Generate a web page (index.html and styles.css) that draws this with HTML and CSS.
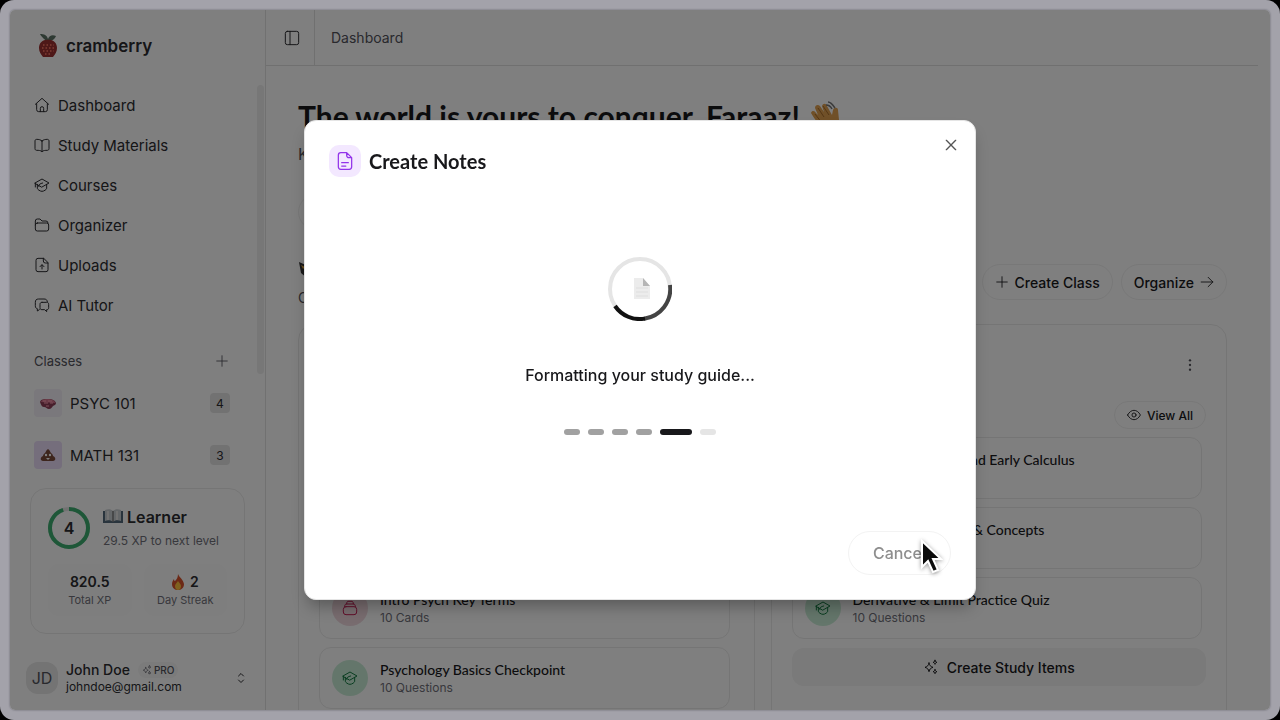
FILE: index.html
```html
<!DOCTYPE html>
<html lang="en">
<head>
    <meta charset="UTF-8">
    <meta name="viewport" content="width=device-width, initial-scale=1.0">
    <title>cramberry</title>
    <link rel="stylesheet" href="styles.css">
</head>
<body>
    <!-- Shared icons -->
    <svg class="sprite" aria-hidden="true">
        <symbol id="i-home" viewBox="0 0 24 24"><path d="M2 11 12 2l10 9M4 10v9a3 3 0 0 0 3 3h10a3 3 0 0 0 3-3v-9M9.500 22v-5a2.500 2.500 0 0 1 5 0v5"/></symbol>
        <symbol id="i-book" viewBox="0 0 24 24"><path d="M12 6c-2-2-5-2.500-8-2.500-1.500 0-2.500 1-2.500 2.500v11.500c0 1.500 1 2.500 2.500 2.500 3 0 6 0 8 2 2-2 5-2 8-2 1.500 0 2.500-1 2.500-2.500V6c0-1.500-1-2.500-2.500-2.500-3 0-6 .5-8 2.500zM12 6v16"/></symbol>
        <symbol id="i-cap" viewBox="0 0 24 24"><path d="M1.500 9 12 3l10.500 6L12 15zM2 9.500V15M5 11v6c0 1.500 4 4.500 7 4.500s7-3 7-4.500v-6M7 14c0-3 2-4 6-5"/></symbol>
        <symbol id="i-folder" viewBox="0 0 24 24"><path d="M2 12V6a3 3 0 0 1 3-3h4l3 3h6a3 3 0 0 1 3 3M5 9h14a3 3 0 0 1 3 3v6a3 3 0 0 1-3 3H5a3 3 0 0 1-3-3v-6a3 3 0 0 1 3-3z"/></symbol>
        <symbol id="i-upload" viewBox="0 0 24 24"><path d="M14 2H6a3 3 0 0 0-3 3v14a3 3 0 0 0 3 3h12a3 3 0 0 0 3-3V9zM14 2v4a3 3 0 0 0 3 3h4M12 18v-6M9 14.500l3-3 3 3"/></symbol>
        <symbol id="i-chat" viewBox="0 0 24 24"><path d="M20 7c-.5-3-2-4-5-4H7C3.500 3 2 4.500 2 8v5c0 3 1 4 3 4.500V21l3-2M12 8h7c2 0 3 1 3 3v5c0 2-1 3-3 3v3l-3-3h-4c-2 0-3-1-3-3v-5c0-2 1-3 3-3z"/></symbol>
        <symbol id="i-panel" viewBox="0 0 24 24"><rect x="2" y="2" width="20" height="20" rx="3"/><path d="M9 2v20"/></symbol>
        <symbol id="i-plus" viewBox="0 0 24 24"><path d="M12 3v18M3 12h18"/></symbol>
        <symbol id="i-arrow" viewBox="0 0 24 24"><path d="M2 12h20M14 4l8 8-8 8"/></symbol>
        <symbol id="i-close" viewBox="0 0 24 24"><path d="M5 5l14 14M19 5 5 19"/></symbol>
        <symbol id="i-eye" viewBox="0 0 24 24"><path d="M1 12c3-5.500 7-8 11-8s8 2.500 11 8c-3 5.500-7 8-11 8S4 17.500 1 12z"/><circle cx="12" cy="12" r="3.500"/></symbol>
        <symbol id="i-sparkle" viewBox="0 0 24 24"><path d="M9 6c1 4 2 5 6 6.500-4 1.500-5 2.500-6 6.500-1-4-2-5-6-6.500 4-1.500 5-2.500 6-6.500zM18 2c.5 2 1 2.500 3 3-2 .5-2.500 1-3 3-.5-2-1-2.500-3-3 2-.5 2.500-1 3-3zM18 16c.5 2 1 2.500 3 3-2 .5-2.500 1-3 3-.5-2-1-2.500-3-3 2-.5 2.500-1 3-3z"/></symbol>
        <symbol id="i-sort" viewBox="0 0 24 24"><path d="M7 8l5-5 5 5M7 16l5 5 5-5"/></symbol>
        <symbol id="i-note" viewBox="0 0 24 24"><path d="M14 2H7a3 3 0 0 0-3 3v14a3 3 0 0 0 3 3h10a3 3 0 0 0 3-3V8zM14 2v3a3 3 0 0 0 3 3h3M8 14h8M8 18h5"/></symbol>
        <symbol id="i-cards" viewBox="0 0 24 24"><rect x="2" y="10" width="20" height="12" rx="4"/><path d="M4 10c0-3 1-4 3-4h10c2 0 3 1 3 4M7 6c0-3 1-4 2-4h6c1 0 2 1 2 4"/></symbol>
        <symbol id="i-dots" viewBox="0 0 24 24"><g fill="currentColor" stroke="none"><circle cx="12" cy="4" r="2"/><circle cx="12" cy="12" r="2"/><circle cx="12" cy="20" r="2"/></g></symbol>
    </svg>

    <div class="frame">
        <div class="app">
            <!-- Sidebar -->
            <aside class="sidebar">
                <div class="brand">
                    <svg class="brand-logo" viewBox="0 0 24 24">
                        <path d="M12 7C9 7 5 2 4 0c4 0 7 1 8 5 1-3 4-5 8-3-1 3-4 5-8 5z" fill="#5d7466"/>
                        <path d="M12 6c5-1 9 3 9 8 0 4-2 6-4 9H7c-2-3-4-5-4-9 0-5 4-9 9-8z" fill="#9c3030"/>
                        <path d="M7 11h11M6 14h13M7 17h11M9 20h7" stroke="#ff7a66" stroke-width="1.500" stroke-dasharray="1.500 2" fill="none"/>
                    </svg>
                    <span>cramberry</span>
                </div>

                <div class="sidebar-scroll">
                    <nav class="nav">
                        <a href="#"><svg class="icon"><use href="#i-home"/></svg>Dashboard</a>
                        <a href="#"><svg class="icon"><use href="#i-book"/></svg>Study Materials</a>
                        <a href="#"><svg class="icon"><use href="#i-cap"/></svg>Courses</a>
                        <a href="#"><svg class="icon"><use href="#i-folder"/></svg>Organizer</a>
                        <a href="#"><svg class="icon"><use href="#i-upload"/></svg>Uploads</a>
                        <a href="#"><svg class="icon"><use href="#i-chat"/></svg>AI Tutor</a>
                    </nav>
                    <div class="classes-head">
                        <span>Classes</span>
                        <button type="button" aria-label="Add class"><svg class="icon"><use href="#i-plus"/></svg></button>
                    </div>
                    <nav class="classes">
                        <a href="#">
                            <span class="tile">
                                <svg viewBox="0 0 16 16"><path d="M0 7c1-3 4-3 8-3s7 1 8 4c0 2-2 2-3 3s-2 3-4 3-3-2-5-2-3-2-4-5z" fill="#8f3f58"/><path d="M1 7c1-3 4-3 7-3s7 1 7 4z" fill="#d4748e"/><path d="M3 6h3M8 6h4M4 8h4M10 8h3M6 11h3" stroke="#ffa0b5" fill="none"/></svg>
                            </span>
                            PSYC 101
                            <span class="count">4</span>
                        </a>
                        <a href="#">
                            <span class="tile tile-purple">
                                <svg viewBox="0 0 16 16"><path d="M8 2c2 1 2 3 3 4 2 1 2 3 2 3 3 1 3 5 0 5H3c-3 0-3-4 0-5 0 0 0-2 2-3 1-1 1-3 3-4z" fill="#7a4a3a"/><circle cx="6" cy="8" r="1.200" fill="#fff"/><circle cx="10" cy="8" r="1.200" fill="#fff"/><path d="M6 11h4l-2 2z" fill="#fff"/></svg>
                            </span>
                            MATH 131
                            <span class="count">3</span>
                        </a>
                    </nav>
                    <div class="thumb"></div>
                </div>

                <div class="level-card">
                    <div class="level-top">
                        <div class="ring">
                            <svg viewBox="0 0 42 42"><circle cx="21" cy="21" r="19" class="ring-track"/><circle cx="21" cy="21" r="19" class="ring-value" pathLength="100"/></svg>
                            <span>4</span>
                        </div>
                        <div>
                            <div class="level-name">
                                <svg viewBox="0 0 20 16"><path d="M0 2h20v12H0z" fill="#52697a"/><path d="M2 1c3-1 6-1 8 1 2-2 5-2 8-1v11c-3-1-6-1-8 1-2-2-5-2-8-1z" fill="#c9ced2"/><path d="M10 2v11" stroke="#555" fill="none"/><path d="M5 2v9M14 2v9" stroke="#e4e4e4" stroke-width="2" fill="none"/></svg>
                                Learner
                            </div>
                            <div class="level-next">29.5 XP to next level</div>
                        </div>
                    </div>
                    <div class="stats">
                        <div class="stat"><strong>820.5</strong><span>Total XP</span></div>
                        <div class="stat">
                            <strong><svg viewBox="0 0 12 16"><path d="M6 0c1 3 5 5 6 10 0 4-3 6-6 6s-6-2-6-6c0-2 1-4 2-5 0 2 1 2 1 2 2-2 3-4 3-7z" fill="#d9532c"/><path d="M6 7c1 2 3 3 3 5s-1 4-3 4-3-2-3-4 2-3 3-5z" fill="#ffc23d"/></svg>2</strong>
                            <span>Day Streak</span>
                        </div>
                    </div>
                </div>

                <button type="button" class="profile">
                    <span class="avatar">JD</span>
                    <span class="who">
                        <span class="who-name">John Doe <span class="pro"><svg class="icon"><use href="#i-sparkle"/></svg>PRO</span></span>
                        <span class="who-mail">johndoe@gmail.com</span>
                    </span>
                    <svg class="icon"><use href="#i-sort"/></svg>
                </button>
            </aside>

            <!-- Main content -->
            <main class="main">
                <header class="topbar">
                    <button type="button" aria-label="Toggle sidebar"><svg class="icon"><use href="#i-panel"/></svg></button>
                    <a href="#">Dashboard</a>
                </header>

                <div class="content">
                    <h1>The world is yours to conquer, Faraaz!
                        <svg viewBox="0 0 30 30"><path d="M1 12c1-3 4-2 5 0l2 2-3-7c0-3 3-4 5-2l4 6-2-6c1-3 4-3 5 0l5 9 1-5c1-3 5-3 5 0l1 10c0 8-6 10-11 9C11 27 7 22 1 12z" fill="#e0a050"/><path d="M8 7l6 9M13 5l6 9M5 13l7 9" stroke="#a86d2a" fill="none"/><path d="M18 1c3 0 5 3 7 6M16 4c3 0 5 2 6 4" stroke="#777" stroke-width="1.500" fill="none"/></svg>
                    </h1>
                    <p class="lead">Keep up the momentum</p>
                    <div class="quick"><button type="button" class="pill">Create Notes</button></div>

                    <div class="section-head">
                        <div>
                            <h2><svg viewBox="0 0 20 20"><path d="M1 2l9 4 9-4-2 11-7 6-7-6z" fill="#333"/><path d="M3 5l4 2-2 2z" fill="#d9a23d"/></svg>Classes</h2>
                            <p>Continue where you left off</p>
                        </div>
                        <div class="actions">
                            <button type="button" class="pill"><svg class="icon"><use href="#i-plus"/></svg>Create Class</button>
                            <button type="button" class="pill">Organize<svg class="icon"><use href="#i-arrow"/></svg></button>
                        </div>
                    </div>

                    <div class="cards">
                        <section class="card">
                            <div class="card-head"><h3>PSYC 101</h3><button type="button" aria-label="More"><svg class="icon"><use href="#i-dots"/></svg></button></div>
                            <div class="card-sub"><span>Study Items</span><button type="button" class="pill pill-small"><svg class="icon"><use href="#i-eye"/></svg>View All</button></div>
                            <div class="items">
                                <a href="#" class="item"><span class="dot purple"><svg class="icon"><use href="#i-note"/></svg></span><span><b>Psychology Notes</b><small>Notes</small></span></a>
                                <a href="#" class="item"><span class="dot purple"><svg class="icon"><use href="#i-note"/></svg></span><span><b>Brain and Behavior</b><small>Notes</small></span></a>
                                <a href="#" class="item"><span class="dot pink"><svg class="icon"><use href="#i-cards"/></svg></span><span><b>Intro Psych Key Terms</b><small>10 Cards</small></span></a>
                                <a href="#" class="item"><span class="dot green"><svg class="icon"><use href="#i-cap"/></svg></span><span><b>Psychology Basics Checkpoint</b><small>10 Questions</small></span></a>
                            </div>
                        </section>
                        <section class="card">
                            <div class="card-head"><h3>MATH 131</h3><button type="button" aria-label="More"><svg class="icon"><use href="#i-dots"/></svg></button></div>
                            <div class="card-sub"><span>Study Items</span><button type="button" class="pill pill-small"><svg class="icon"><use href="#i-eye"/></svg>View All</button></div>
                            <div class="items">
                                <a href="#" class="item"><span class="dot purple"><svg class="icon"><use href="#i-note"/></svg></span><span><b>Functions, Limits, and Early Calculus</b><small>Notes</small></span></a>
                                <a href="#" class="item"><span class="dot pink"><svg class="icon"><use href="#i-cards"/></svg></span><span><b>Key Limit Formulas &amp; Concepts</b><small>10 Cards</small></span></a>
                                <a href="#" class="item"><span class="dot green"><svg class="icon"><use href="#i-cap"/></svg></span><span><b>Derivative &amp; Limit Practice Quiz</b><small>10 Questions</small></span></a>
                            </div>
                            <button type="button" class="create"><svg class="icon"><use href="#i-sparkle"/></svg>Create Study Items</button>
                        </section>
                    </div>
                </div>
            </main>

            <div class="backdrop"></div>
        </div>
    </div>

    <!-- Create notes dialog -->
    <div class="modal-layer">
        <div class="modal" role="dialog" aria-labelledby="modal-title">
            <div class="modal-head">
                <span class="modal-icon"><svg class="icon"><use href="#i-note"/></svg></span>
                <h2 id="modal-title">Create Notes</h2>
            </div>
            <button type="button" class="modal-close" aria-label="Close"><svg class="icon"><use href="#i-close"/></svg></button>
            <div class="modal-body">
                <svg class="spinner" viewBox="0 0 64 64">
                    <circle cx="32" cy="32" r="30" fill="none" stroke="#e5e5e5" stroke-width="4"/>
                    <path d="M62 28A30 30 0 0 1 36 61.700" fill="none" stroke="#444" stroke-width="4"/>
                    <path d="M37 61.600A30 30 0 0 1 7 49" fill="none" stroke="#111" stroke-width="4"/>
                    <path d="M26 21h9l7 8v13H26z" fill="#ececec"/>
                    <path d="M35 21v8h7z" fill="#b5b5b5"/>
                    <path d="M28 31h12M28 35h12M28 39h12" stroke="#dedede"/>
                </svg>
                <p>Formatting your study guide...</p>
                <div class="steps">
                    <span class="done"></span><span class="done"></span><span class="done"></span><span class="done"></span><span class="active"></span><span></span>
                </div>
            </div>
            <div class="modal-foot">
                <button type="button" class="cancel" disabled>Cancel</button>
                <svg class="pointer" viewBox="0 0 24 36"><path d="M3 2v26l6-6 5 11 5-2-5-11h8z" fill="#0a0a0a" stroke="#fff" stroke-width="2"/></svg>
            </div>
        </div>
    </div>
</body>
</html>
```
FILE: styles.css
```css
/* General Styles */
* {
    box-sizing: border-box;
}

body {
    margin: 0;
    background: #000;
    color: #18181b;
    font-family: Inter, "Liberation Sans", sans-serif;
    font-size: 14px;
}

h1, h2, h3, p {
    margin: 0;
}

h1, h2, h3 {
    font-family: Lato, Inter, sans-serif;
}

button {
    font: inherit;
    color: inherit;
    background: none;
    border: 0;
    padding: 0;
}

a {
    color: inherit;
    text-decoration: none;
}

.sprite {
    display: none;
}

.icon {
    width: 16px;
    height: 16px;
    flex: none;
    display: block;
    fill: none;
    stroke: currentColor;
    stroke-width: 1.5;
    stroke-linecap: round;
    stroke-linejoin: round;
}

/* Window frame */
.frame {
    height: 100vh;
    padding: 10px;
    background: #a3a2aa;
    border-radius: 14px;
}

.app {
    position: relative;
    display: flex;
    height: 100%;
    overflow: hidden;
    background: #fff;
    border-radius: 5px;
    box-shadow: 0 0 2px rgba(40, 40, 50, 0.6);
}

.backdrop {
    position: absolute;
    inset: 0;
    background: rgba(0, 0, 0, 0.5);
}

/* Sidebar */
.sidebar {
    display: flex;
    flex-direction: column;
    flex: none;
    width: 256px;
    border-right: 1px solid #e2e2e2;
    color: #2c2c30;
}

.brand {
    display: flex;
    align-items: center;
    gap: 6px;
    height: 75px;
    padding: 0 24px 4px 26px;
    font-size: 17px;
    font-weight: 600;
}

.brand-logo {
    width: 24px;
    height: 24px;
}

.sidebar-scroll {
    position: relative;
    flex: 1;
    min-height: 0;
    overflow: hidden;
    padding: 0 16px 0 24px;
}

.thumb {
    position: absolute;
    top: 0;
    right: 1px;
    width: 7px;
    height: 289px;
    border-radius: 4px;
    background: #efefef;
}

.nav a {
    display: flex;
    align-items: center;
    gap: 8px;
    height: 40px;
    font-size: 15px;
}

.classes-head {
    display: flex;
    align-items: center;
    justify-content: space-between;
    height: 32px;
    margin-top: 20px;
    padding-right: 20px;
    font-size: 13px;
    color: #52525b;
}

.classes-head .icon {
    width: 14px;
    height: 14px;
}

.classes a {
    display: flex;
    align-items: center;
    gap: 8px;
    height: 52px;
    padding-right: 19px;
    font-size: 15px;
}

.tile {
    display: grid;
    place-items: center;
    width: 28px;
    height: 28px;
    border-radius: 4px;
    background: #f4f0f8;
}

.tile svg {
    width: 16px;
    height: 16px;
}

.tile-purple {
    background: #eadcf8;
}

.count {
    display: grid;
    place-items: center;
    width: 20px;
    height: 20px;
    margin-left: auto;
    border-radius: 4px;
    background: #e4e4e4;
    font-size: 12px;
}

/* Level card */
.level-card {
    margin: 0 20px 12px;
    padding: 17px;
    border: 1px solid #ebebeb;
    border-radius: 16px;
}

.level-top {
    display: flex;
    align-items: center;
    gap: 13px;
    height: 44px;
    white-space: nowrap;
}

.ring {
    display: grid;
    place-items: center;
    flex: none;
    font-size: 16px;
    font-weight: 600;
}

.ring > * {
    grid-area: 1 / 1;
}

.ring svg {
    width: 42px;
    height: 42px;
    transform: rotate(-90deg);
}

.ring circle {
    fill: none;
    stroke-width: 4;
}

.ring-track {
    stroke: #e5e5e5;
}

.ring-value {
    stroke: #3cae70;
    stroke-dasharray: 95 5;
}

.level-name {
    display: flex;
    align-items: center;
    gap: 4px;
    font-size: 16px;
    line-height: 24px;
    font-weight: 600;
}

.level-name svg {
    width: 20px;
    height: 16px;
}

.level-next {
    padding-top: 2px;
    font-size: 12px;
    line-height: 20px;
    color: #71717a;
}

.stats {
    display: grid;
    grid-template-columns: 1fr 1fr;
    gap: 12px;
    margin-top: 14px;
}

.stat {
    display: flex;
    flex-direction: column;
    align-items: center;
    padding: 8px 0;
    border-radius: 10px;
    background: #fcfcfc;
}

.stat strong {
    display: flex;
    align-items: center;
    gap: 6px;
    font-size: 14px;
    line-height: 20px;
    font-weight: 600;
}

.stat strong svg {
    width: 12px;
    height: 16px;
}

.stat span {
    font-size: 11px;
    line-height: 16px;
    color: #71717a;
}

.profile {
    display: flex;
    align-items: center;
    gap: 8px;
    height: 64px;
    padding: 0 18px 0 16px;
    text-align: left;
}

.profile > .icon {
    width: 12px;
    height: 12px;
    stroke-width: 2;
}

.avatar {
    display: grid;
    place-items: center;
    width: 32px;
    height: 32px;
    border-radius: 12px;
    background: #e8e8e8;
    color: #52525b;
    font-size: 16px;
}

.who {
    flex: 1;
}

.who-name {
    display: flex;
    align-items: center;
    gap: 8px;
    line-height: 18px;
    font-weight: 500;
}

.who-mail {
    display: block;
    font-size: 12px;
    line-height: 16px;
}

.pro {
    display: flex;
    align-items: center;
    gap: 2px;
    padding: 0 4px;
    border-radius: 8px;
    background: #f6f6f6;
    color: #52525b;
    font-size: 10px;
    line-height: 16px;
}

.pro .icon {
    width: 10px;
    height: 10px;
}

/* Main */
.main {
    flex: 1;
    min-width: 0;
    margin-right: 12px;
}

.topbar {
    display: flex;
    align-items: center;
    height: 56px;
    border-bottom: 1px solid #e0e0e0;
    color: #52525b;
}

.topbar button {
    display: grid;
    place-items: center;
    width: 49px;
    height: 100%;
    padding-left: 4px;
    border-right: 1px solid #e0e0e0;
    color: #2c2c30;
}

.topbar a {
    margin-left: 16px;
}

.content {
    padding: 32px 31px 32px 32px;
}

h1 {
    display: flex;
    align-items: center;
    gap: 10px;
    font-size: 30px;
    line-height: 36px;
    font-weight: 700;
}

h1 svg {
    width: 30px;
    height: 30px;
}

.lead {
    margin-top: 8px;
    font-size: 16px;
    line-height: 24px;
    color: #52525b;
}

.quick {
    margin: 28px 0 24px;
}

.pill {
    display: flex;
    align-items: center;
    gap: 6px;
    height: 36px;
    padding: 0 12px;
    border: 1px solid #f0f0f0;
    border-radius: 18px;
    font-weight: 500;
}

.pill .icon {
    width: 14px;
    height: 14px;
}

.pill-small {
    height: 28px;
    font-size: 12px;
}

.section-head {
    display: flex;
    align-items: center;
    justify-content: space-between;
    height: 56px;
    margin-bottom: 14px;
}

.section-head h2 {
    display: flex;
    align-items: center;
    gap: 8px;
    font-size: 20px;
    line-height: 32px;
}

.section-head h2 svg {
    width: 20px;
    height: 20px;
}

.section-head p {
    line-height: 24px;
    color: #52525b;
}

.actions {
    display: flex;
    gap: 8px;
}

.cards {
    display: grid;
    grid-template-columns: 1fr 1fr;
    gap: 16px;
}

.card {
    padding: 20px;
    border: 1px solid #ebebeb;
    border-radius: 16px;
}

.card-head, .card-sub {
    display: flex;
    align-items: center;
    justify-content: space-between;
}

.card-head {
    height: 40px;
    margin-bottom: 16px;
    padding-right: 9px;
}

.card-head .icon {
    width: 14px;
    height: 14px;
    color: #52525b;
}

.card-sub {
    margin-bottom: 8px;
}

.items {
    display: flex;
    flex-direction: column;
    gap: 8px;
    padding-right: 4px;
}

.item {
    display: flex;
    gap: 12px;
    height: 62px;
    padding: 12px;
    border: 1px solid #ebebeb;
    border-radius: 12px;
    white-space: nowrap;
}

.item b {
    display: block;
    font-family: Lato, Inter, sans-serif;
    font-size: 14px;
    line-height: 20px;
    font-weight: 500;
}

.item small {
    display: block;
    font-size: 12px;
    line-height: 16px;
    color: #71717a;
}

.dot {
    display: grid;
    place-items: center;
    flex: none;
    width: 36px;
    height: 36px;
    border-radius: 50%;
}

.purple {
    background: #f3e8ff;
    color: #9333ea;
}

.pink {
    background: #f0d8df;
    color: #c41f55;
}

.green {
    background: #c9edd7;
    color: #127a40;
}

.create {
    display: flex;
    align-items: center;
    justify-content: center;
    gap: 8px;
    width: 100%;
    height: 38px;
    margin-top: 9px;
    border-radius: 12px;
    background: #f4f4f4;
    font-weight: 500;
}

/* Dialog */
.modal-layer {
    position: fixed;
    inset: 0;
    display: grid;
    place-items: center;
}

.modal {
    position: relative;
    display: flex;
    flex-direction: column;
    width: min(672px, 90vw);
    min-height: 480px;
    padding: 24px;
    border: 1px solid #e5e5e5;
    border-radius: 12px;
    background: #fff;
    box-shadow: 0 10px 16px -4px rgba(0, 0, 0, 0.3);
}

.modal-head {
    display: flex;
    align-items: center;
    gap: 8px;
}

.modal-head h2 {
    font-size: 20px;
    line-height: 32px;
    font-weight: 700;
}

.modal-icon {
    display: grid;
    place-items: center;
    width: 32px;
    height: 32px;
    border-radius: 10px;
    background: #f3e8ff;
    color: #9333ea;
}

.modal-icon .icon {
    width: 20px;
    height: 20px;
}

.modal-close {
    position: absolute;
    top: 16px;
    right: 16px;
    color: #555;
}

.modal-close .icon {
    stroke-width: 2;
}

.modal-body {
    display: flex;
    flex: 1;
    flex-direction: column;
    align-items: center;
    justify-content: center;
    gap: 40px;
    padding-bottom: 16px;
}

.spinner {
    width: 64px;
    height: 64px;
}

.modal-body p {
    font-size: 16px;
    line-height: 28px;
    font-weight: 500;
}

.steps {
    display: flex;
    gap: 8px;
}

.steps span {
    width: 16px;
    height: 6px;
    border-radius: 3px;
    background: #e5e5e5;
}

.steps .done {
    background: #a1a1a1;
}

.steps .active {
    width: 32px;
    background: #18181b;
}

.modal-foot {
    position: relative;
    display: flex;
    justify-content: flex-end;
}

.cancel {
    height: 44px;
    padding: 0 24px;
    border: 1px solid #f3f3f3;
    border-radius: 22px;
    color: #8e8e8e;
    font-size: 16px;
    font-weight: 500;
}

.pointer {
    position: absolute;
    top: 8px;
    right: 8px;
    width: 24px;
    height: 36px;
    filter: drop-shadow(0 1px 2px rgba(0, 0, 0, 0.4));
}
```
